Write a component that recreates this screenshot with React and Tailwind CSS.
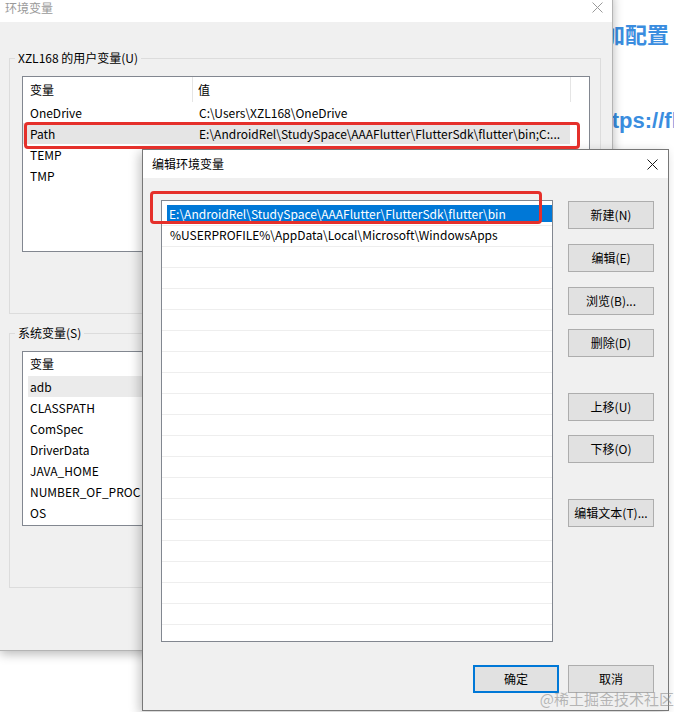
import React from "react";

const userVars = [
  ["OneDrive", "C:\\Users\\XZL168\\OneDrive"],
  ["Path", "E:\\AndroidRel\\StudySpace\\AAAFlutter\\FlutterSdk\\flutter\\bin;C:..."],
  ["TEMP", ""],
  ["TMP", ""],
];

const sysVars = ["adb", "CLASSPATH", "ComSpec", "DriverData", "JAVA_HOME", "NUMBER_OF_PROC", "OS"];

const pathEntries = [
  "E:\\AndroidRel\\StudySpace\\AAAFlutter\\FlutterSdk\\flutter\\bin",
  "%USERPROFILE%\\AppData\\Local\\Microsoft\\WindowsApps",
];

const CloseIcon = ({ color }) => (
  <svg width="11" height="11" viewBox="0 0 11 11">
    <path d="M0.5 0.5 L10.5 10.5 M10.5 0.5 L0.5 10.5" stroke={color} strokeWidth="1" fill="none" />
  </svg>
);

const WinButton = ({ children, primary, className = "" }) => (
  <button
    className={
      "w-[86px] h-[28px] bg-[#e1e1e1] text-[12px] text-black flex items-center justify-center " +
      (primary ? "border-2 border-[#0078d7] " : "border border-[#adadad] ") +
      className
    }
  >
    {children}
  </button>
);

const App = () => {
  return (
    <div className="relative w-[674px] h-[712px] overflow-hidden bg-white font-['Noto_Sans_CJK_SC',sans-serif] text-[12px] text-black">
      {/* blog page behind the windows */}
      <div className="absolute left-[581px] top-[18px] text-[22px] leading-[30px] font-bold text-[#3a8ddf] whitespace-nowrap">
        添加配置
      </div>
      <div className="absolute left-[591px] top-[106px] text-[22px] leading-[30px] font-bold text-[#3a8ddf] whitespace-nowrap font-['Liberation_Sans',sans-serif]">
        https://fl
      </div>

      {/* 环境变量 window (inactive) */}
      <div className="absolute left-0 top-[-8px] w-[613px] h-[659px] bg-[#f0f0f0] border-r border-b border-[#b4b4b4] shadow-[0_3px_10px_rgba(0,0,0,0.28)]">
        <div className="h-[30px] bg-white flex items-center justify-between pl-[5px] pr-[9px]">
          <span className="text-[#9a9a9a] text-[12px] leading-[13px]">环境变量</span>
          <CloseIcon color="#9a9a9a" />
        </div>

        <fieldset className="mt-[28px] ml-[9px] w-[592px] border border-[#dcdcdc] pl-[12px] pt-[10px] pb-[61px]">
          <legend className="ml-[-7px] px-[3px] leading-[16px]">XZL168 的用户变量(U)</legend>
          <div className="w-[568px] h-[176px] bg-white border border-[#828790] overflow-hidden">
            <div className="flex h-[25px]">
              <div className="w-[170px] pl-[7px] flex items-center border-r border-[#e5e5e5]">变量</div>
              <div className="w-[378px] pl-[5px] flex items-center border-r border-[#e5e5e5]">值</div>
            </div>
            {userVars.map(([name, value]) => (
              <div
                key={name}
                className={"flex h-[21px] w-[547px] items-center " + (name === "Path" ? "bg-[#e5e5e5]" : "")}
              >
                <div className="w-[170px] pl-[7px] whitespace-nowrap overflow-hidden">{name}</div>
                <div className="w-[377px] pl-[6px] whitespace-nowrap overflow-hidden">{value}</div>
              </div>
            ))}
          </div>
        </fieldset>

        <fieldset className="mt-[11px] ml-[9px] w-[592px] border border-[#dcdcdc] pl-[12px] pt-[10px] pb-[61px]">
          <legend className="ml-[-7px] px-[3px] leading-[16px]">系统变量(S)</legend>
          <div className="w-[568px] h-[175px] bg-white border border-[#828790] overflow-hidden">
            <div className="flex h-[24px]">
              <div className="w-[170px] pl-[7px] flex items-center border-r border-[#e5e5e5]">变量</div>
              <div className="w-[378px] pl-[5px] flex items-center border-r border-[#e5e5e5]">值</div>
            </div>
            {sysVars.map((name) => (
              <div
                key={name}
                className={"flex h-[21px] w-[542px] ml-[5px] items-center " + (name === "adb" ? "bg-[#ebebeb]" : "")}
              >
                <div className="w-[165px] pl-[2px] whitespace-nowrap overflow-hidden">{name}</div>
              </div>
            ))}
          </div>
        </fieldset>
      </div>

      {/* 编辑环境变量 window (active) */}
      <div className="absolute left-[142px] top-[149px] w-[527px] h-[562px] bg-[#f0f0f0] border border-[#777777] shadow-[-3px_3px_10px_rgba(0,0,0,0.22)]">
        <div className="h-[28px] bg-white flex items-center justify-between pl-[9px] pr-[10px]">
          <span className="text-[12px] text-black">编辑环境变量</span>
          <CloseIcon color="#1a1a1a" />
        </div>

        <div className="flex pl-[18px] pt-[22px]">
          <div className="w-[392px] h-[442px] bg-white border border-[#828790] overflow-hidden pt-[1px]">
            {Array.from({ length: 21 }).map((_, i) => (
              <div key={i} className="h-[21px] border-b border-[#eeeeee]">
                {i === 0 && (
                  <div className="ml-[5px] mt-[3px] h-[17px] bg-[#0078d7] text-white pl-[2px] flex items-center whitespace-nowrap">
                    {pathEntries[0]}
                  </div>
                )}
                {i === 1 && (
                  <div className="h-full pl-[8px] pb-[2px] flex items-center whitespace-nowrap">{pathEntries[1]}</div>
                )}
              </div>
            ))}
          </div>

          <div className="ml-[15px] mt-[1px] flex flex-col">
            <WinButton>新建(N)</WinButton>
            <WinButton className="mt-[15px]">编辑(E)</WinButton>
            <WinButton className="mt-[15px]">浏览(B)...</WinButton>
            <WinButton className="mt-[14px]">删除(D)</WinButton>
            <WinButton className="mt-[36px]">上移(U)</WinButton>
            <WinButton className="mt-[14px]">下移(O)</WinButton>
            <WinButton className="mt-[36px]">编辑文本(T)...</WinButton>
          </div>
        </div>

        <div className="flex justify-end pr-[14px] mt-[23px] gap-[9px]">
          <WinButton primary>确定</WinButton>
          <WinButton>取消</WinButton>
        </div>
      </div>

      {/* red annotation boxes */}
      <div className="absolute left-[24px] top-[122px] w-[556px] h-[27px] border-[3px] border-[#e5302b] rounded-[4px]" />
      <div className="absolute left-[150px] top-[191px] w-[392px] h-[33px] border-[3px] border-[#e5302b] rounded-[4px]" />

      {/* watermark */}
      <div className="absolute right-0 bottom-[3px] text-[15px] leading-[20px] text-[rgba(140,140,140,0.6)] whitespace-nowrap">
        @稀土掘金技术社区
      </div>
    </div>
  );
};

export default App;
